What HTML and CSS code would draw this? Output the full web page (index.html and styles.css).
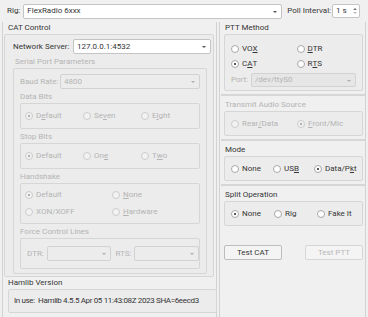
FILE: index.html
```html
<!DOCTYPE html>
<html lang="en">
<head>
    <meta charset="UTF-8">
    <title>Rig Control Settings</title>
    <link rel="stylesheet" href="styles.css">
</head>
<body>
    <div class="top-bar">
        <span class="label">Rig:</span>
        <div class="combo rig-combo"><span class="combo-text">FlexRadio 6xxx</span><span class="arrow"></span></div>
        <span class="label poll-label">Poll Interval:</span>
        <div class="spin"><span class="combo-text">1 s</span><span class="spin-btns"><span class="up"></span><span class="down"></span></span></div>
    </div>

    <div class="main">
        <!-- left column -->
        <div class="column left-col">
            <div class="group-title">CAT Control</div>
            <div class="group cat-group">
                <div class="form-row network-row">
                    <span class="label">Network Server:</span>
                    <div class="combo network-combo"><span class="combo-text">127.0.0.1:4532</span><span class="arrow"></span></div>
                </div>

                <div class="disabled">
                    <div class="group-title sub-title">Serial Port Parameters</div>
                    <div class="group serial-group">
                        <div class="form-row baud-row">
                            <span class="label">Baud Rate:</span>
                            <div class="combo baud-combo"><span class="combo-text">4800</span><span class="arrow"></span></div>
                        </div>

                        <div class="group-title inner-title">Data Bits</div>
                        <div class="group radio-group">
                            <div class="radio-row three">
                                <span class="radio checked"><i></i>D<u>e</u>fault</span>
                                <span class="radio"><i></i>Se<u>v</u>en</span>
                                <span class="radio"><i></i>E<u>i</u>ght</span>
                            </div>
                        </div>

                        <div class="group-title inner-title">Stop Bits</div>
                        <div class="group radio-group">
                            <div class="radio-row three">
                                <span class="radio checked"><i></i>Default</span>
                                <span class="radio"><i></i>On<u>e</u></span>
                                <span class="radio"><i></i>T<u>w</u>o</span>
                            </div>
                        </div>

                        <div class="group-title inner-title">Handshake</div>
                        <div class="group radio-group handshake">
                            <div class="radio-row two">
                                <span class="radio checked"><i></i>Default</span>
                                <span class="radio"><i></i><u>N</u>one</span>
                            </div>
                            <div class="radio-row two">
                                <span class="radio"><i></i>XON/XOFF</span>
                                <span class="radio"><i></i><u>H</u>ardware</span>
                            </div>
                        </div>

                        <div class="group-title inner-title">Force Control Lines</div>
                        <div class="group force-group">
                            <span class="label">DTR:</span>
                            <div class="combo line-combo"><span class="arrow"></span></div>
                            <span class="label rts-label">RTS:</span>
                            <div class="combo line-combo"><span class="arrow"></span></div>
                        </div>
                    </div>
                </div>
            </div>

            <div class="group-title">Hamlib Version</div>
            <div class="group hamlib-group">
                <span class="label version">In use:&nbsp; Hamlib 4.5.5 Apr 05 11:43:08Z 2023 SHA=6eecd3</span>
            </div>
        </div>

        <!-- right column -->
        <div class="column right-col">
            <div class="group-title">PTT Method</div>
            <div class="group ptt-group">
                <div class="radio-row ptt">
                    <span class="radio"><i></i>VO<u>X</u></span>
                    <span class="radio"><i></i><u>D</u>TR</span>
                </div>
                <div class="radio-row ptt">
                    <span class="radio checked"><i></i>C<u>A</u>T</span>
                    <span class="radio"><i></i>R<u>T</u>S</span>
                </div>
                <div class="form-row port-row disabled">
                    <span class="label">Port:</span>
                    <div class="combo port-combo"><span class="combo-text">/dev/ttyS0</span><span class="arrow"></span></div>
                </div>
            </div>
            <div class="separator"></div>

            <div class="disabled">
                <div class="group-title">Transmit Audio Source</div>
                <div class="group single-group">
                    <div class="radio-row audio">
                        <span class="radio"><i></i>Rear<u>/</u>Data</span>
                        <span class="radio checked"><i></i><u>F</u>ront/Mic</span>
                    </div>
                </div>
            </div>
            <div class="separator"></div>

            <div class="group-title">Mode</div>
            <div class="group single-group">
                <div class="radio-row mode">
                    <span class="radio"><i></i>None</span>
                    <span class="radio"><i></i>US<u>B</u></span>
                    <span class="radio checked"><i></i>Data/P<u>k</u>t</span>
                </div>
            </div>
            <div class="separator"></div>

            <div class="group-title">Split Operation</div>
            <div class="group single-group">
                <div class="radio-row split">
                    <span class="radio checked"><i></i>None</span>
                    <span class="radio"><i></i>Rig</span>
                    <span class="radio"><i></i>Fake It</span>
                </div>
            </div>

            <div class="buttons">
                <button class="btn">Test CAT</button>
                <button class="btn" disabled>Test PTT</button>
            </div>
        </div>
    </div>
</body>
</html>
```

FILE: styles.css
```css
* {
    margin: 0;
    padding: 0;
    box-sizing: border-box;
}

body {
    width: 368px;
    height: 317px;
    overflow: hidden;
    background-color: #f0f0f0;
    color: #363636;
    font-family: Roboto, "Noto Sans", sans-serif;
    font-size: 8px;
    line-height: 12px;
}

u {
    text-decoration: underline;
    text-underline-offset: 1px;
}

/* top bar */
.top-bar {
    height: 22px;
    display: flex;
    align-items: center;
    padding-left: 7px;
}

.combo {
    position: relative;
    height: 15px;
    background-color: #ffffff;
    border: 1px solid #c4c4c4;
    border-radius: 2px;
    display: flex;
    align-items: center;
    padding-left: 3px;
}

.combo .arrow {
    position: absolute;
    right: 4px;
    top: 6px;
    border-left: 2px solid transparent;
    border-right: 2px solid transparent;
    border-top: 2px solid #555555;
}

.rig-combo {
    width: 259px;
    margin-left: 3px;
}

.poll-label {
    margin-left: 5px;
}

.spin {
    position: relative;
    width: 28px;
    height: 14px;
    margin-left: 1px;
    background-color: #ffffff;
    border: 1px solid #c4c4c4;
    border-radius: 2px;
    display: flex;
    align-items: center;
    padding-left: 3px;
}

.spin-btns .up,
.spin-btns .down {
    position: absolute;
    right: 2px;
    border-left: 2px solid transparent;
    border-right: 2px solid transparent;
}

.spin-btns .up {
    top: 3px;
    border-bottom: 2px solid #777777;
}

.spin-btns .down {
    top: 7px;
    border-top: 2px solid #bbbbbb;
}

/* columns */
.main {
    display: flex;
    height: 295px;
}

.column {
    border-left: 1px solid #d2d2d2;
    border-right: 1px solid #d2d2d2;
}

.left-col {
    width: 215px;
    margin-left: 2px;
    padding-left: 1px;
}

.right-col {
    width: 147px;
    margin-left: 2px;
    padding-left: 4px;
    padding-right: 2px;
}

.group-title {
    height: 12px;
    padding-left: 4px;
}

.right-col .group-title {
    padding-left: 1px;
}

.group {
    border: 1px solid #d6d6d6;
    border-radius: 2px;
    background-color: #ececec;
}

.separator {
    height: 2px;
    margin: 3px -2px 3px -3px;
    background-color: #d6d6d6;
}

.form-row {
    display: flex;
    align-items: center;
}

.label {
    white-space: nowrap;
}

/* CAT control */
.cat-group {
    width: 210px;
    height: 243px;
    padding: 4px 2px 0 8px;
}

.network-combo {
    width: 138px;
    margin-left: auto;
}

.sub-title {
    margin-top: 2px;
    padding-left: 2px;
}

.serial-group {
    width: 194px;
    height: 206px;
    padding: 5px 6px 0 6px;
}

.baud-combo {
    width: 140px;
    margin-left: auto;
    background-color: #ececec;
}

.inner-title {
    margin-top: 2px;
    padding-left: 0;
}

.radio-group {
    height: 26px;
    display: flex;
    flex-direction: column;
    justify-content: center;
    padding-left: 4px;
}

.radio-group.handshake {
    height: 41px;
    gap: 5px;
}

.radio-row {
    display: flex;
    align-items: center;
    height: 12px;
}

.radio {
    display: inline-flex;
    align-items: center;
    white-space: nowrap;
}

.radio i {
    position: relative;
    width: 8px;
    height: 8px;
    border: 1px solid #a8a8a8;
    border-radius: 50%;
    background-color: #ffffff;
    margin-right: 3px;
}

.radio.checked i::after {
    content: "";
    position: absolute;
    left: 2px;
    top: 2px;
    width: 2px;
    height: 2px;
    border-radius: 50%;
    background-color: #222222;
}

.three .radio {
    width: 58px;
}

.two .radio {
    width: 88px;
}

.force-group {
    height: 31px;
    display: flex;
    align-items: center;
    padding-left: 6px;
}

.line-combo {
    width: 65px;
    margin-left: 3px;
    background-color: #ececec;
}

.rts-label {
    margin-left: 4px;
}

.hamlib-group {
    width: 209px;
    height: 24px;
    margin-left: 4px;
    padding-left: 5px;
    display: flex;
    align-items: center;
}

.version {
    letter-spacing: -0.35px;
}

/* right column */
.ptt-group {
    height: 57px;
    padding: 6px 0 0 6px;
}

.radio-row.ptt {
    height: 15px;
}

.ptt .radio {
    width: 66px;
}

.port-row {
    margin-top: 2px;
}

.port-combo {
    width: 105px;
    height: 14px;
    margin-left: 3px;
    background-color: #e6e6e6;
}

.single-group {
    height: 25px;
    display: flex;
    align-items: center;
    padding-left: 6px;
}

.audio .radio {
    width: 66px;
}

.mode .radio:nth-child(1) { width: 42px; }
.mode .radio:nth-child(2) { width: 41px; }

.split .radio:nth-child(1) { width: 43px; }
.split .radio:nth-child(2) { width: 43px; }

.buttons {
    display: flex;
    justify-content: space-between;
    margin-top: 19px;
}

.btn {
    width: 58px;
    height: 15px;
    font-family: inherit;
    font-size: 8px;
    color: #363636;
    background-color: #f4f4f4;
    border: 1px solid #bdbdbd;
    border-radius: 2px;
}

.btn:disabled {
    color: #b8b8b8;
    border-color: #d6d6d6;
}

/* disabled widgets */
.disabled {
    color: #b4b4b4;
}

.disabled .radio i {
    background-color: #f2f2f2;
    border-color: #cccccc;
}

.disabled .radio.checked i::after {
    background-color: #9a9a9a;
}

.disabled .combo {
    border-color: #d2d2d2;
}

.disabled .combo .arrow {
    border-top-color: #b0b0b0;
}
```
